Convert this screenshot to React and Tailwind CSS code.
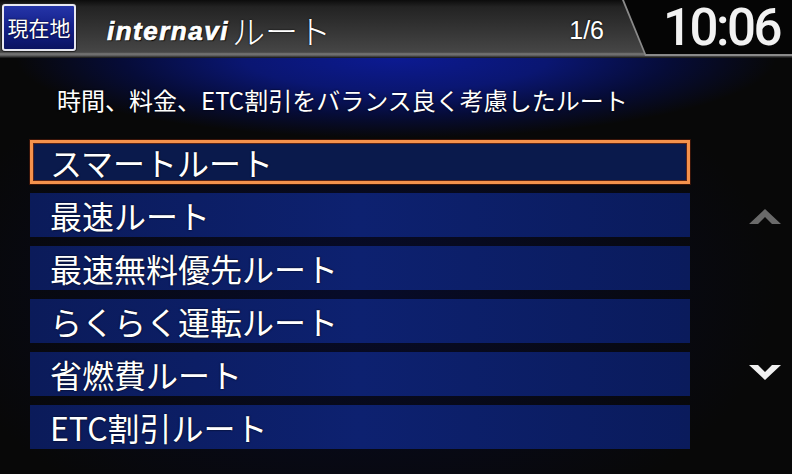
import React from 'react';

const routes = [
  'スマートルート',
  '最速ルート',
  '最速無料優先ルート',
  'らくらく運転ルート',
  '省燃費ルート',
  'ETC割引ルート',
];

const RouteRow = ({ label, selected }) => {
  if (selected) {
    return (
      <div className="h-[44px] flex items-center pl-[17px] border-[3px] border-[#f4924c] bg-[#0a1a4c] shadow-[inset_0_0_0_1px_#5a2416,0_0_0_1px_#3a1408]">
        <span className="text-[32px] leading-none text-white [text-shadow:0_0_2px_#000]">{label}</span>
      </div>
    );
  }
  return (
    <div className="h-[44px] flex items-center pl-[20px] bg-[linear-gradient(to_right,#0b1b5a,#0d2170_50%,#0a1b5c)]">
      <span className="text-[32px] leading-none text-white [text-shadow:0_0_2px_#000]">{label}</span>
    </div>
  );
};

const App = () => {
  return (
    <div className="w-[792px] h-[474px] overflow-hidden bg-[#080808] flex flex-col font-['Noto_Sans_CJK_JP',sans-serif] text-white">
      {/* header */}
      <header className="h-[58px] flex items-start bg-[linear-gradient(to_bottom,#0c0c0c_0%,#232323_12%,#363636_55%,#464646_90%,#7a7a7a_93%,#5a5a5a_96%,#101010_100%)]">
        <div className="ml-[2px] mt-[4px] w-[74px] h-[47px] flex items-center justify-center rounded-[3px] border-2 border-[#e8e8f0] bg-[linear-gradient(to_bottom,#2535a8,#14208a_50%,#0b1360)] shadow-[0_0_0_1px_#222]">
          <span className="text-[21px] leading-none text-white [text-shadow:0_0_2px_#000]">現在地</span>
        </div>

        <div className="ml-[31px] mt-[14px] flex items-center">
          <span className="font-['Liberation_Sans',sans-serif] italic font-black text-[26px] leading-none tracking-[1.5px] text-white [-webkit-text-stroke:0.7px_#fff] [text-shadow:0_0_2px_#000,1px_1px_1px_#000]">
            internavi
          </span>
          <span className="ml-[3px] text-[33px] leading-none font-light text-white [text-shadow:0_0_2px_#000]">ルート</span>
        </div>

        <div className="flex-1" />

        <span className="mt-[18px] mr-[18px] font-['Liberation_Sans',sans-serif] text-[25px] leading-none text-white [text-shadow:0_0_2px_#000]">1/6</span>

        {/* clock with slanted black plate */}
        <div className="relative w-[170px] h-[56px] flex items-center pl-[41px]">
          <svg className="absolute inset-0" width="170" height="56" viewBox="0 0 170 56">
            <polygon points="0,0 170,0 170,56 23,56" fill="#8a8a8a" />
            <polygon points="2,0 170,0 170,54 24,54" fill="#050505" />
          </svg>
          <span className="relative font-['Roboto',sans-serif] font-medium text-[51px] leading-[44px] text-[#f2f2f2] tracking-[-2.5px]">10:06</span>
        </div>
      </header>

      {/* description */}
      <div className="h-[82px] pt-[26px] pl-[57px] bg-[radial-gradient(ellipse_380px_80px_at_50%_0%,#0c1a92_0%,#0a1672_40%,#060c38_72%,#080808_100%)]">
        <p className="text-[24px] leading-[32px] text-white [text-shadow:0_0_2px_#000]">
          時間、料金、ETC割引をバランス良く考慮したルート
        </p>
      </div>

      {/* list */}
      <div className="flex-1 flex bg-[radial-gradient(ellipse_420px_260px_at_45%_45%,#070b2a_0%,#080808_100%)]">
        <div className="ml-[30px] w-[660px] flex flex-col gap-[9px]">
          {routes.map((r, i) => (
            <RouteRow key={r} label={r} selected={i === 0} />
          ))}
        </div>
        <div className="flex-1 flex flex-col pl-[59px] pt-[68px]">
          <svg width="32" height="16" viewBox="0 0 32 16">
            <polygon points="0,16 16,1 32,16 23,16 16,9 9,16" fill="#6a6a6a" />
          </svg>
          <svg className="mt-[141px]" width="32" height="16" viewBox="0 0 32 16">
            <polygon points="0,0 9,0 16,7 23,0 32,0 16,15" fill="#f0f0f0" />
          </svg>
        </div>
      </div>
    </div>
  );
};

export default App;
